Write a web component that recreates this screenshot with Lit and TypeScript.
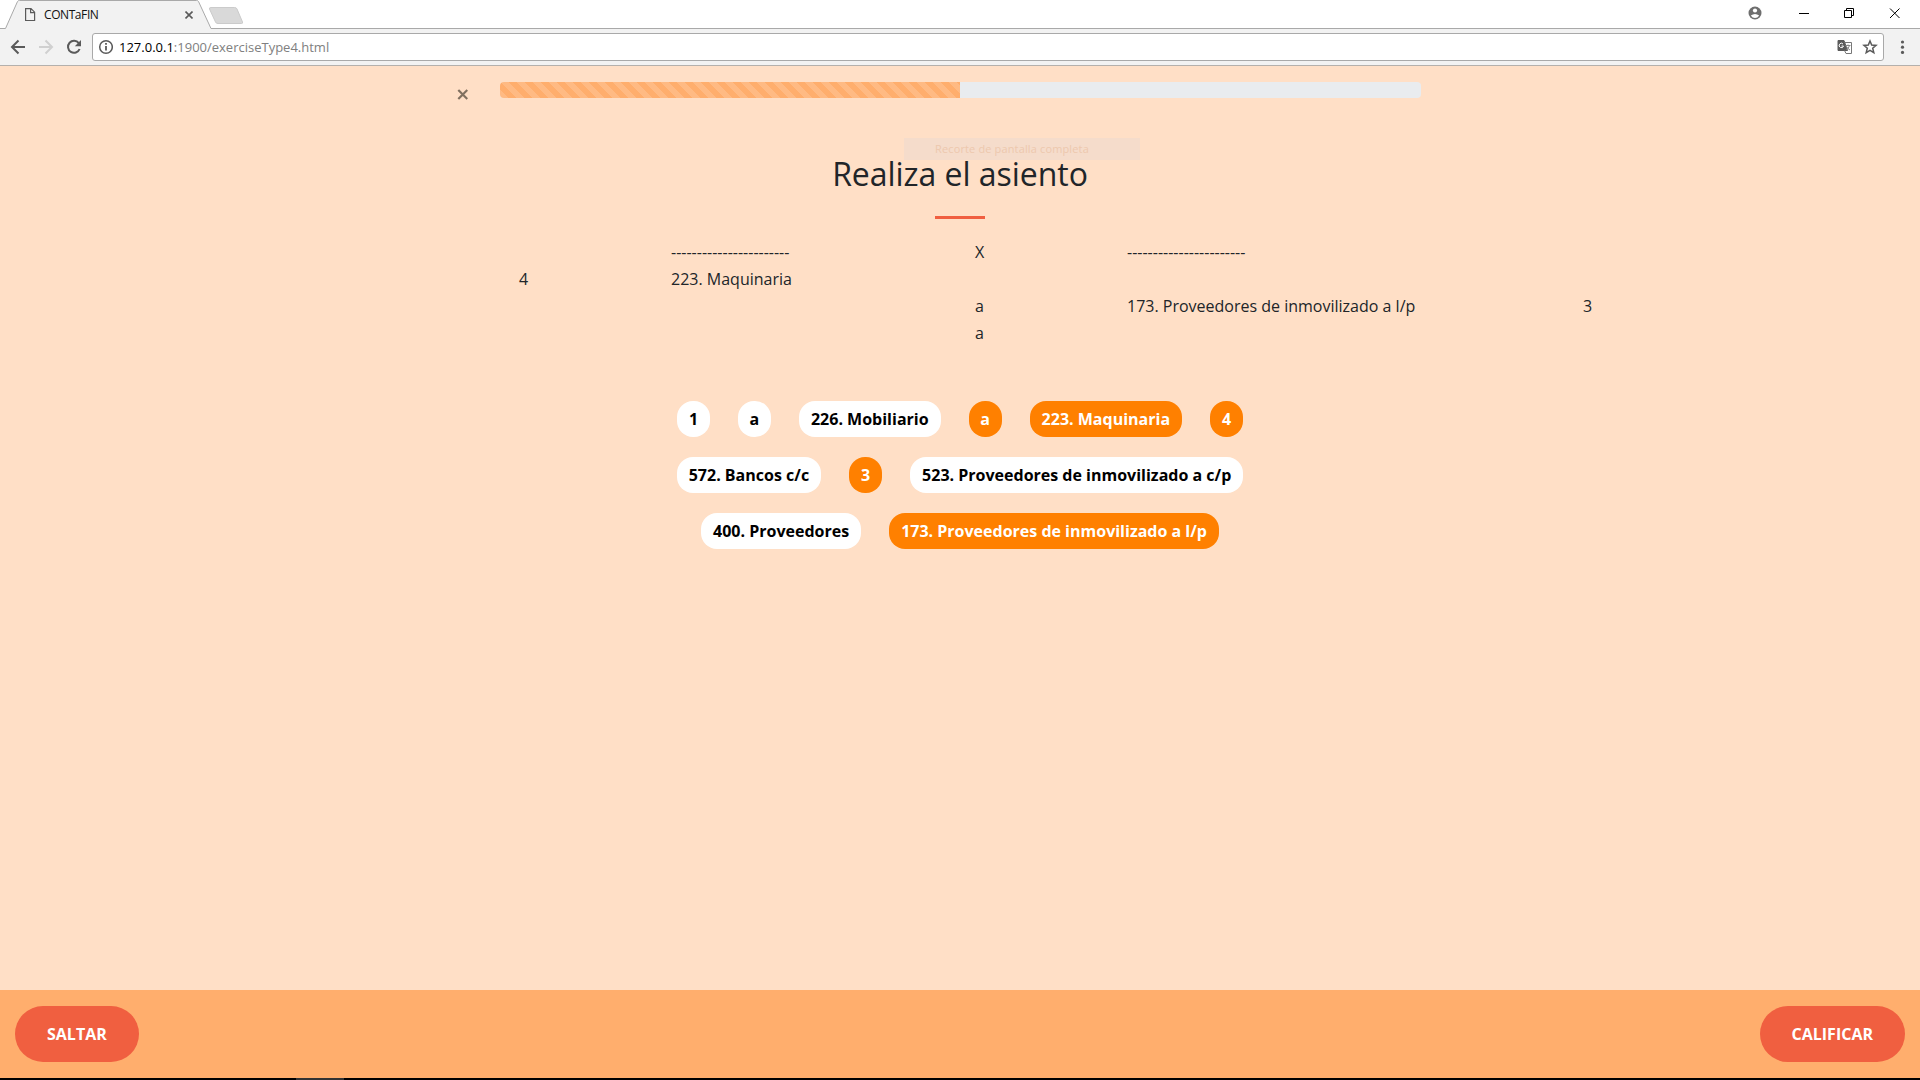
import { LitElement, html, css } from "lit";
import { customElement } from "lit/decorators.js";

@customElement("browser-chrome")
class BrowserChrome extends LitElement {
  static styles = css`
    :host { display: block; font-family: "Open Sans", "Liberation Sans", sans-serif; }
    svg { display: block; }
    .strip { height: 29px; display: flex; justify-content: space-between; background: #fff; position: relative; }
    .shape { position: absolute; left: 0; top: 0; }
    .tab { position: relative; display: flex; align-items: center; height: 29px; padding-left: 24px; font-size: 12px; letter-spacing: -0.42px; color: #111; }
    .name { width: 141px; padding-left: 8px; }
    .win { position: relative; }
    .bar { height: 36px; display: flex; background: #f2f2f2; border-bottom: 1px solid #b4b0ac; }
    .nav { width: 92px; }
    .url { box-sizing: border-box; flex: 1; height: 28px; margin-top: 4px; border: 1px solid #a9a9a9; border-radius: 3px; background: #fff; display: flex; align-items: center; justify-content: space-between; font-size: 13px; color: #808080; }
    .addr { display: flex; align-items: center; }
    .txt { padding-left: 6px; white-space: nowrap; }
    .host { color: #000; }
  `;
  render() {
    return html`
      <div class="strip">
        <svg class="shape" width="1920" height="29" fill="none">
          <path d="M0 28.5H5.5L17.5 1.5Q18 .5 19.5 .5H196.500Q198 .5 198.500 1.500L211 28.500H1920V29H0Z" fill="#f2f2f2" stroke="none"/>
          <path d="M0 28.5H5.5L17.500 1.500Q18 .5 19.500 .5H196.500Q198 .5 198.500 1.500L211 28.500H1920" stroke="#a9a9a9"/>
          <path d="M211 7.500H234.500Q236.500 7.500 237 9L242.500 22Q243 23.500 241.500 23.500H218Q216 23.500 215.500 22L209.500 9Q209 7.500 211 7.500Z" fill="#d9d9d9" stroke="#cbcbcb"/>
        </svg>
        <div class="tab">
          <svg width="12" height="15" fill="none" stroke="#5a5a5a" stroke-width="1.2"><path d="M1.600 1.600H7L10.600 5.200V13.500H1.600ZM6.600 1.600V5.600H10.600"/></svg>
          <span class="name">CONTaFIN</span>
          <svg width="8" height="8" stroke="#5a5a5a" stroke-width="1.600"><path d="M.5 .5L7.500 7.500M7.500 .5L.5 7.500"/></svg>
        </div>
        <svg class="win" width="180" height="28" fill="none" stroke="#000">
          <circle cx="15" cy="13" r="6.500" fill="#6e6e6e" stroke="none"/>
          <circle cx="15" cy="10.500" r="2.100" fill="#fff" stroke="none"/>
          <path d="M10.800 15.500Q15 12.500 19.200 15.500Q17.500 18 15 18T10.800 15.500Z" fill="#fff" stroke="none"/>
          <path d="M59 13.500H69M104.500 10.500H111.500V17.500H104.500ZM106.500 10.500V8.500H113.500V15.500H111.500M150 8.500L159.500 18M159.500 8.500L150 18"/>
        </svg>
      </div>
      <div class="bar">
        <svg class="nav" width="92" height="36" fill="none" stroke-width="2">
          <path d="M25 18H12.500M18.500 11.500L12 18L18.500 24.500" stroke="#5a5a5a"/>
          <path d="M39 18H51.500M45.500 11.500L52 18L45.500 24.500" stroke="#d0d0d0"/>
          <path d="M78.800 14.200A6 6 0 1 0 79.600 20" stroke="#5a5a5a"/>
          <path d="M81 11V17.200H74.800Z" fill="#5a5a5a"/>
        </svg>
        <div class="url">
          <div class="addr">
            <svg width="20" height="26" fill="none" stroke="#5a5a5a" stroke-width="1.500"><circle cx="13" cy="13" r="6.300"/><path d="M13 12V16.500M13 9V10.700" stroke-width="1.800"/></svg>
            <span class="txt"><span class="host">127.0.0.1</span>:1900/exerciseType4.html</span>
          </div>
          <svg width="49" height="26" fill="none">
            <path d="M4 6.500H10L13.500 16.500H4Z" fill="#5a5a5a" stroke="#5a5a5a"/>
            <path d="M10.500 8.500H17.500V19.500H12L10.500 16.500" stroke="#777"/>
            <path d="M9 10A2.200 2.200 0 1 0 9.500 12H7.500" stroke="#fff"/>
            <path d="M11.500 11.500H16.500M14 10.500V11.500M15.500 11.500Q14.500 14.500 12.500 16M12.800 13Q14 15 16 16" stroke="#888"/>
            <path d="M36 7L37.700 11.100L42 11.400L38.700 14.200L39.800 18.600L36 16.300L32.200 18.600L33.300 14.200L30 11.400L34.300 11.100Z" stroke="#5a5a5a" stroke-width="1.500"/>
          </svg>
        </div>
        <svg width="36" height="36" fill="#5a5a5a"><circle cx="18.500" cy="13" r="1.600"/><circle cx="18.500" cy="18.200" r="1.600"/><circle cx="18.500" cy="23.400" r="1.600"/></svg>
      </div>`;
  }
}

type Answer = { text: string; used?: boolean };

@customElement("app-root")
class AppRoot extends LitElement {
  static styles = css`
    :host { display: flex; flex-direction: column; width: 1920px; height: 1080px; overflow: hidden; background: #ffdfc6; font-family: "Open Sans", "Liberation Sans", sans-serif; font-size: 16px; color: #212529; }
    .main { flex: 1; display: flex; flex-direction: column; }
    .top { display: flex; height: 32px; padding: 16px 0 0 457px; gap: 32px; }
    .close { margin-top: 7px; }
    .progress { width: 920.6px; height: 16px; border-radius: 4px; overflow: hidden; background: #e9ecef; }
    .fill { height: 100%; background: #ffae6d linear-gradient(45deg, rgba(255,255,255,.15) 25%, transparent 25%, transparent 50%, rgba(255,255,255,.15) 50%, rgba(255,255,255,.15) 75%, transparent 75%) 0 0 / 16px 16px; }
    .heading { position: relative; display: flex; flex-direction: column; align-items: center; padding-top: 47px; }
    .title { margin: 0; font-size: 32px; font-weight: 400; letter-spacing: -0.04px; line-height: 26px; }
    .rule { width: 50px; height: 3px; margin-top: 29px; background: #f05f40; }
    .ghost { position: absolute; left: 904px; top: 24px; box-sizing: border-box; width: 236px; height: 22px; padding-left: 31px; background: #f5dccb; color: #edc8ae; font-size: 11px; letter-spacing: 0.14px; line-height: 22px; }
    .entry { display: grid; grid-template-columns: 152px 304px 152px 456px 152px; grid-auto-rows: 27px; line-height: 27px; padding-left: 519px; margin-top: 20px; }
    .answers { display: flex; flex-direction: column; gap: 20px; margin-top: 54px; }
    .line { display: flex; justify-content: center; gap: 28px; }
    .chip { box-sizing: border-box; height: 36px; padding: 0 12px; border-radius: 16px; background: #fff; color: #000; font-weight: 700; line-height: 36px; text-align: center; white-space: nowrap; }
    .single { width: 33px; padding: 0; }
    .used { background: #ff8000; color: #fff; }
    .footer { box-sizing: border-box; height: 88px; padding: 0 15px; display: flex; align-items: center; justify-content: space-between; background: #ffae6d; }
    .btn { font: inherit; font-weight: 700; color: #fff; border: 0; height: 56px; border-radius: 28px; padding: 0 32px; background: #f05f40; }
    .edge { height: 2px; background: #000; padding-left: 296px; }
    .active { width: 48px; height: 2px; background: #333; }
  `;
  private cells = [
    "", "-----------------------", "X", "-----------------------", "",
    "4", "223. Maquinaria", "", "", "",
    "", "", "a", "173. Proveedores de inmovilizado a l/p", "3",
    "", "", "a", "", "",
  ];
  private lines: Answer[][] = [
    [{ text: "1" }, { text: "a" }, { text: "226. Mobiliario" }, { text: "a", used: true }, { text: "223. Maquinaria", used: true }, { text: "4", used: true }],
    [{ text: "572. Bancos c/c" }, { text: "3", used: true }, { text: "523. Proveedores de inmovilizado a c/p" }],
    [{ text: "400. Proveedores" }, { text: "173. Proveedores de inmovilizado a l/p", used: true }],
  ];
  render() {
    return html`
      <browser-chrome></browser-chrome>
      <div class="main">
        <div class="top">
          <svg class="close" width="11" height="11" stroke="#80705f" stroke-width="2.200"><path d="M1.300 1L10.300 10M10.300 1L1.300 10"/></svg>
          <div class="progress"><div class="fill" style="width:50%"></div></div>
        </div>
        <div class="heading">
          <div class="ghost">Recorte de pantalla completa</div>
          <h2 class="title">Realiza el asiento</h2>
          <div class="rule"></div>
        </div>
        <div class="entry">${this.cells.map((c) => html`<span>${c}</span>`)}</div>
        <div class="answers">
          ${this.lines.map((l) => html`<div class="line">${l.map((a) => html`<span class="chip ${a.used ? "used" : ""} ${a.text.length === 1 ? "single" : ""}">${a.text}</span>`)}</div>`)}
        </div>
      </div>
      <div class="footer"><button class="btn">SALTAR</button><button class="btn">CALIFICAR</button></div>
      <div class="edge"><div class="active"></div></div>`;
  }
}
